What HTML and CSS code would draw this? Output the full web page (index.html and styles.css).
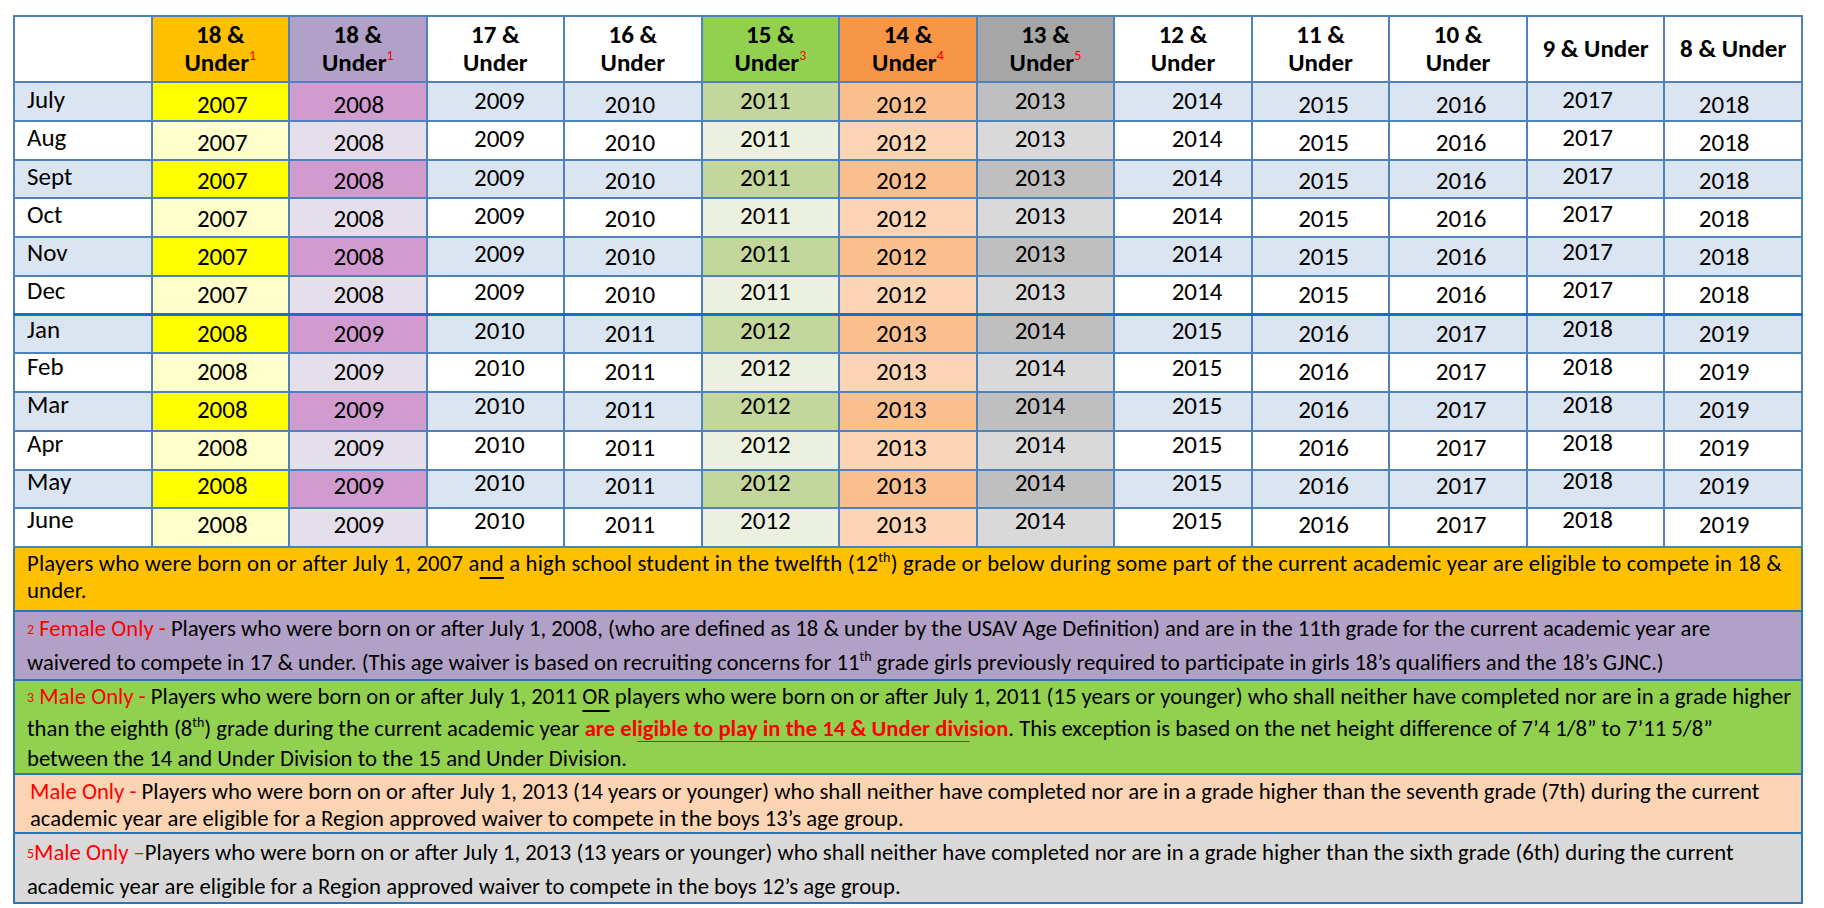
FILE: index.html
```html
<!DOCTYPE html>
<html lang="en">
<head>
<meta charset="utf-8">
<title>Age Definition Chart</title>
<link rel="stylesheet" href="styles.css">
</head>
<body>
<table class="chart">
  <thead>
    <tr>
      <th></th>
      <th class="h-or">18 &amp;<br>Under<sup class="mk">1</sup></th>
      <th class="h-pu">18 &amp;<br>Under<sup class="mk">1</sup></th>
      <th>17 &amp;<br>Under</th>
      <th>16 &amp;<br>Under</th>
      <th class="h-gr">15 &amp;<br>Under<sup class="mk">3</sup></th>
      <th class="h-og">14 &amp;<br>Under<sup class="mk">4</sup></th>
      <th class="h-gy">13 &amp;<br>Under<sup class="mk">5</sup></th>
      <th>12 &amp;<br>Under</th>
      <th>11 &amp;<br>Under</th>
      <th>10 &amp;<br>Under</th>
      <th>9 &amp; Under</th>
      <th>8 &amp; Under</th>
    </tr>
  </thead>
  <tbody>
    <tr class="d b"><td>July</td><td>2007</td><td>2008</td><td>2009</td><td>2010</td><td>2011</td><td>2012</td><td>2013</td><td>2014</td><td>2015</td><td>2016</td><td>2017</td><td>2018</td></tr>
    <tr class="d w"><td>Aug</td><td>2007</td><td>2008</td><td>2009</td><td>2010</td><td>2011</td><td>2012</td><td>2013</td><td>2014</td><td>2015</td><td>2016</td><td>2017</td><td>2018</td></tr>
    <tr class="d b"><td>Sept</td><td>2007</td><td>2008</td><td>2009</td><td>2010</td><td>2011</td><td>2012</td><td>2013</td><td>2014</td><td>2015</td><td>2016</td><td>2017</td><td>2018</td></tr>
    <tr class="d w"><td>Oct</td><td>2007</td><td>2008</td><td>2009</td><td>2010</td><td>2011</td><td>2012</td><td>2013</td><td>2014</td><td>2015</td><td>2016</td><td>2017</td><td>2018</td></tr>
    <tr class="d b"><td>Nov</td><td>2007</td><td>2008</td><td>2009</td><td>2010</td><td>2011</td><td>2012</td><td>2013</td><td>2014</td><td>2015</td><td>2016</td><td>2017</td><td>2018</td></tr>
    <tr class="d w"><td>Dec</td><td>2007</td><td>2008</td><td>2009</td><td>2010</td><td>2011</td><td>2012</td><td>2013</td><td>2014</td><td>2015</td><td>2016</td><td>2017</td><td>2018</td></tr>
    <tr class="d b jan"><td>Jan</td><td>2008</td><td>2009</td><td>2010</td><td>2011</td><td>2012</td><td>2013</td><td>2014</td><td>2015</td><td>2016</td><td>2017</td><td>2018</td><td>2019</td></tr>
    <tr class="d w"><td>Feb</td><td>2008</td><td>2009</td><td>2010</td><td>2011</td><td>2012</td><td>2013</td><td>2014</td><td>2015</td><td>2016</td><td>2017</td><td>2018</td><td>2019</td></tr>
    <tr class="d b"><td>Mar</td><td>2008</td><td>2009</td><td>2010</td><td>2011</td><td>2012</td><td>2013</td><td>2014</td><td>2015</td><td>2016</td><td>2017</td><td>2018</td><td>2019</td></tr>
    <tr class="d w"><td>Apr</td><td>2008</td><td>2009</td><td>2010</td><td>2011</td><td>2012</td><td>2013</td><td>2014</td><td>2015</td><td>2016</td><td>2017</td><td>2018</td><td>2019</td></tr>
    <tr class="d b"><td>May</td><td>2008</td><td>2009</td><td>2010</td><td>2011</td><td>2012</td><td>2013</td><td>2014</td><td>2015</td><td>2016</td><td>2017</td><td>2018</td><td>2019</td></tr>
    <tr class="d w"><td>June</td><td>2008</td><td>2009</td><td>2010</td><td>2011</td><td>2012</td><td>2013</td><td>2014</td><td>2015</td><td>2016</td><td>2017</td><td>2018</td><td>2019</td></tr>

    <tr class="fn fn1"><td colspan="13">Players who were born on or after July 1, 2007 a<u class="off">nd</u> a high school student in the twelfth (12<sup class="th">th</sup>) grade or below during some part of the current academic year are eligible to compete in 18 &amp;<br>under.</td></tr>
    <tr class="fn fn2"><td colspan="13"><span class="num">2</span> <span class="red">Female Only -</span> Players who were born on or after July 1, 2008, (who are defined as 18 &amp; under by the USAV Age Definition) and are in the 11th grade for the current academic year are<br>waivered to compete in 17 &amp; under. (This age waiver is based on recruiting concerns for 11<sup class="th">th</sup> grade girls previously required to participate in girls 18’s qualifiers and the 18’s GJNC.)</td></tr>
    <tr class="fn fn3"><td colspan="13"><span class="num">3</span> <span class="red">Male Only -</span> Players who were born on or after July 1, 2011 <u class="off">OR</u> players who were born on or after July 1, 2011 (15 years or younger) who shall neither have completed nor are in a grade higher<br>than the eighth (8<sup class="th">th</sup>) grade during the current academic year <span class="rb">are el<u class="off thin">igible to play in the 14 &amp; Under divi</u>sion</span>. This exception is based on the net height difference of 7’4 1/8” to 7’11 5/8”<br>between the 14 and Under Division to the 15 and Under Division.</td></tr>
    <tr class="fn fn4"><td colspan="13"><span class="red">Male Only -</span> Players who were born on or after July 1, 2013 (14 years or younger) who shall neither have completed nor are in a grade higher than the seventh grade (7th) during the current<br>academic year are eligible for a Region approved waiver to compete in the boys 13’s age group.</td></tr>
    <tr class="fn fn5"><td colspan="13"><span class="num">5</span><span class="red">Male Only –</span>Players who were born on or after July 1, 2013 (13 years or younger) who shall neither have completed nor are in a grade higher than the sixth grade (6th) during the current<br>academic year are eligible for a Region approved waiver to compete in the boys 12’s age group.</td></tr>
  </tbody>
</table>
</body>
</html>
```
FILE: styles.css
```css
* { box-sizing: border-box; }

body {
  margin: 0;
  background: #ffffff;
  color: #000000;
  font-family: Carlito, Calibri, Lato, "Open Sans", sans-serif;
}

.chart {
  margin: 15px 0 0 13px;
  width: 1790px;
  border-collapse: collapse;
  table-layout: fixed;
}

.chart th,
.chart td {
  border: 2px solid #4f81bd;
  padding: 0;
}

/* ---------- header ---------- */
.chart thead tr { height: 66px; }

.chart th {
  font-size: 25px;
  font-weight: 700;
  line-height: 28px;
  text-align: center;
  vertical-align: middle;
  background: #ffffff;
}

.chart th.h-or { background: #ffc000; }
.chart th.h-pu { background: #b1a0c7; }
.chart th.h-gr { background: #92d050; }
.chart th.h-og { background: #f79646; }
.chart th.h-gy { background: #a6a6a6; }

.mk {
  color: #ff0000;
  font-size: 14px;
  font-weight: 400;
  line-height: 0;
  vertical-align: 11px;
}

/* ---------- data rows ---------- */
.chart tr.d { height: 38.75px; }

.chart tr.d td {
  font-size: 25px;
  line-height: 20px;
  text-align: center;
  vertical-align: top;
  white-space: nowrap;
  padding-top: calc(7.8px + var(--dy, 0px) + var(--cy, 0px));
}

.chart tr.jan td { border-top: 3px solid #1f6fb8; }

/* row-by-row baseline drift of the original document */
.chart tbody tr:nth-child(1)  { --dy: 0.5px; }
.chart tbody tr:nth-child(2)  { --dy: -0.2px; }
.chart tbody tr:nth-child(3)  { --dy: -0.8px; }
.chart tbody tr:nth-child(4)  { --dy: -1.4px; }
.chart tbody tr:nth-child(5)  { --dy: -2px; }
.chart tbody tr:nth-child(6)  { --dy: -2.6px; }
.chart tbody tr:nth-child(7)  { --dy: -3.2px; }
.chart tbody tr:nth-child(8)  { --dy: -3.8px; }
.chart tbody tr:nth-child(9)  { --dy: -4.4px; }
.chart tbody tr:nth-child(10) { --dy: -5px; }
.chart tbody tr:nth-child(11) { --dy: -5.4px; }
.chart tbody tr:nth-child(12) { --dy: -5.8px; }

/* column placement (vertical: --cy, horizontal: side padding) */
.chart tr.d td:nth-child(1)  { --cy: -1px; text-align: left; padding-left: 12px; }
.chart tr.d td:nth-child(2)  { --cy: 3.5px; padding-left: 4px; }
.chart tr.d td:nth-child(3)  { --cy: 3.5px; padding-left: 2px; }
.chart tr.d td:nth-child(4)  { --cy: 0px; padding-left: 8px; }
.chart tr.d td:nth-child(5)  { --cy: 3.5px; padding-right: 6px; }
.chart tr.d td:nth-child(6)  { --cy: 0px; padding-right: 10px; }
.chart tr.d td:nth-child(7)  { --cy: 3.5px; padding-right: 13px; }
.chart tr.d td:nth-child(8)  { --cy: 0px; padding-right: 11px; }
.chart tr.d td:nth-child(9)  { --cy: 0px; padding-left: 28px; }
.chart tr.d td:nth-child(10) { --cy: 3.5px; padding-left: 6px; }
.chart tr.d td:nth-child(11) { --cy: 3.5px; padding-left: 6px; }
.chart tr.d td:nth-child(12) { --cy: -1.5px; padding-right: 16px; }
.chart tr.d td:nth-child(13) { --cy: 3.5px; padding-right: 18px; }

/* row shading */
.chart tr.b td { background: #dbe5f1; }
.chart tr.w td { background: #ffffff; }

.chart tr.b td:nth-child(2) { background: #ffff00; }
.chart tr.w td:nth-child(2) { background: #ffffcc; }
.chart tr.b td:nth-child(3) { background: #d09cd0; }
.chart tr.w td:nth-child(3) { background: #e5dfec; }
.chart tr.b td:nth-child(6) { background: #c3d69b; }
.chart tr.w td:nth-child(6) { background: #ebf1de; }
.chart tr.b td:nth-child(7) { background: #fabf8f; }
.chart tr.w td:nth-child(7) { background: #fbd4b4; }
.chart tr.b td:nth-child(8) { background: #bfbfbf; }
.chart tr.w td:nth-child(8) { background: #d9d9d9; }

/* ---------- footnotes ---------- */
.chart tr.fn td {
  font-size: 22.7px;
  text-align: left;
  vertical-align: top;
  white-space: nowrap;
  padding-left: 12px;
  border-color: #2e75b6;
}

.chart tr.fn1 { height: 64px; }
.chart tr.fn1 td { background: #ffc000; line-height: 27px; padding-top: 2px; letter-spacing: 0.2px; }

.chart tr.fn2 { height: 66px; }
.chart tr.fn2 td { background: #b2a1c7; line-height: 33px; padding-top: 0; }

.chart tr.fn3 { height: 88px; }
.chart tr.fn3 td { background: #92d050; line-height: 30px; padding-top: 0; }

.chart tr.fn4 { height: 59px; }
.chart tr.fn4 td { background: #fbd4b4; line-height: 27px; padding-top: 3px; padding-left: 15px; }

.chart tr.fn5 { height: 69px; }
.chart tr.fn5 td { background: #d9d9d9; line-height: 32px; padding-top: 2px; }

.th {
  font-size: 14px;
  line-height: 0;
  vertical-align: 9px;
}

.num {
  color: #ff0000;
  font-size: 14px;
  vertical-align: 2px;
}

.red { color: #ff0000; }

.rb {
  color: #ff0000;
  font-weight: 700;
}

u.off {
  text-decoration-thickness: 1.5px;
  text-underline-offset: 6px;
}

u.off.thin {
  text-decoration-thickness: 1px;
  text-decoration-color: #ff0000;
  text-underline-offset: 5px;
}
```
